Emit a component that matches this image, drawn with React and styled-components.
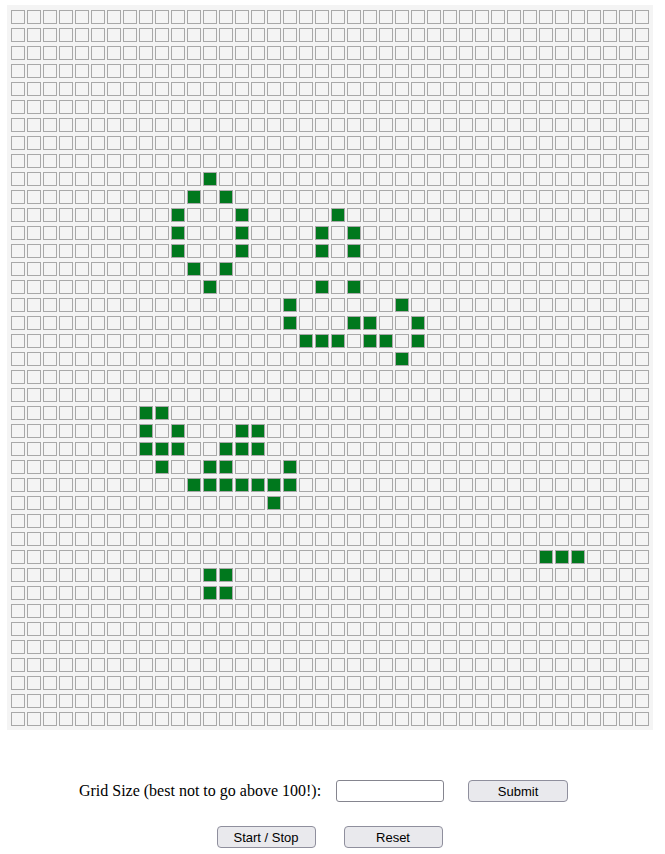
import React, { useEffect, useRef, useState } from "react";
import styled, { createGlobalStyle } from "styled-components";

const GlobalStyle = createGlobalStyle`
  body {
    margin: 0;
    background: #ffffff;
    font-family: "Liberation Serif", "Times New Roman", serif;
  }
`;

const seed = {
  9: [12],
  10: [11, 13],
  11: [10, 14, 20],
  12: [10, 14, 19, 21],
  13: [10, 14, 19, 21],
  14: [11, 13],
  15: [12, 19, 21],
  16: [17, 24],
  17: [17, 21, 22, 25],
  18: [18, 19, 20, 22, 23, 25],
  19: [24],
  22: [8, 9],
  23: [8, 10, 14, 15],
  24: [8, 9, 10, 13, 14, 15],
  25: [9, 12, 13, 17],
  26: [11, 12, 13, 14, 15, 16, 17],
  27: [16],
  30: [33, 34, 35],
  31: [12, 13],
  32: [12, 13],
};

const makeGrid = (size, withSeed) =>
  Array.from({ length: size }, (_, r) =>
    Array.from({ length: size }, (_, c) =>
      withSeed && seed[r] ? seed[r].includes(c) : false
    )
  );

const step = (grid) => {
  const n = grid.length;
  return grid.map((row, r) =>
    row.map((alive, c) => {
      let count = 0;
      for (let dr = -1; dr <= 1; dr++) {
        for (let dc = -1; dc <= 1; dc++) {
          if (dr === 0 && dc === 0) continue;
          const rr = r + dr;
          const cc = c + dc;
          if (rr >= 0 && rr < n && cc >= 0 && cc < n && grid[rr][cc]) count++;
        }
      }
      return alive ? count === 2 || count === 3 : count === 3;
    })
  );
};

const Page = styled.div`
  display: flex;
  flex-direction: column;
  padding-bottom: 6px;
`;

const Board = styled.div`
  align-self: flex-start;
  margin: 5px 0 0 7px;
  padding: 4px 3px 1px 3px;
  background: #f4f4f4;
`;

const Row = styled.div`
  display: flex;
  height: 18px;
`;

const Cell = styled.div`
  box-sizing: border-box;
  width: 14px;
  height: 14px;
  margin: 1px 1px 0 1px;
  border: 1px solid #a8a8a8;
  background: ${(p) => (p.$alive ? "#00781d" : "#f4f4f4")};
  cursor: pointer;
`;

const Controls = styled.form`
  display: flex;
  align-items: center;
  justify-content: center;
  height: 22px;
  margin-top: 50px;
  padding-right: 18px;
`;

const Label = styled.label`
  font-size: 16px;
  color: #000;
  margin-right: 15px;
`;

const SizeInput = styled.input`
  box-sizing: border-box;
  width: 108px;
  height: 22px;
  margin: 0 24px 0 0;
  padding: 1px 4px;
  border: 1px solid #85858f;
  border-radius: 3px;
  font-size: 13px;
  background: #fff;
`;

const Button = styled.button`
  box-sizing: border-box;
  width: ${(p) => p.$width || 100}px;
  height: 22px;
  margin: 0;
  padding: 0;
  border: 1px solid #8f8f9d;
  border-radius: 4px;
  background: #e9e9ed;
  color: #000;
  font-family: "Liberation Sans", Arial, sans-serif;
  font-size: 13px;
  cursor: pointer;
`;

const Actions = styled.div`
  display: flex;
  justify-content: center;
  gap: 28px;
  margin-top: 24px;
  padding-right: 6px;
`;

const App = () => {
  const [size, setSize] = useState(40);
  const [draft, setDraft] = useState("");
  const [grid, setGrid] = useState(() => makeGrid(40, true));
  const [running, setRunning] = useState(false);
  const timer = useRef(null);

  useEffect(() => {
    if (running) {
      timer.current = setInterval(() => setGrid((g) => step(g)), 150);
    }
    return () => clearInterval(timer.current);
  }, [running]);

  const toggleCell = (r, c) => {
    setGrid((g) =>
      g.map((row, ri) => row.map((v, ci) => (ri === r && ci === c ? !v : v)))
    );
  };

  const handleSubmit = (e) => {
    e.preventDefault();
    const n = parseInt(draft, 10);
    if (n > 0) {
      setSize(n);
      setGrid(makeGrid(n, false));
    }
  };

  const handleReset = () => {
    setRunning(false);
    setGrid(makeGrid(size, false));
  };

  return (
    <Page>
      <GlobalStyle />
      <Board>
        {grid.map((row, r) => (
          <Row key={r}>
            {row.map((alive, c) => (
              <Cell key={c} $alive={alive} onClick={() => toggleCell(r, c)} />
            ))}
          </Row>
        ))}
      </Board>
      <Controls onSubmit={handleSubmit}>
        <Label htmlFor="grid-size">Grid Size (best not to go above 100!):</Label>
        <SizeInput
          id="grid-size"
          type="text"
          value={draft}
          onChange={(e) => setDraft(e.target.value)}
        />
        <Button type="submit" $width={100}>
          Submit
        </Button>
      </Controls>
      <Actions>
        <Button type="button" $width={99} onClick={() => setRunning(!running)}>
          Start / Stop
        </Button>
        <Button type="button" $width={99} onClick={handleReset}>
          Reset
        </Button>
      </Actions>
    </Page>
  );
};

export default App;
